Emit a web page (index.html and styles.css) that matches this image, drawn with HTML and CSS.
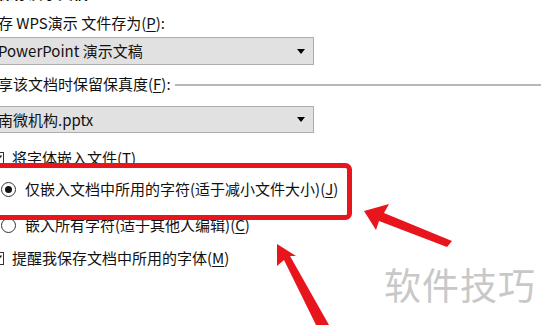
FILE: index.html
```html
<!doctype html>
<html lang="zh-CN">
<head>
  <meta charset="utf-8">
  <title>保存选项</title>
  <link rel="stylesheet" href="styles.css">
</head>
<body>
  <div class="dialog">
    <div class="cut">保存演示文稿</div>
    <div class="label">存 WPS演示 文件存为(<u>P</u>):</div>
    <div class="select"><span>PowerPoint 演示文稿</span><span class="caret"></span></div>
    <div class="group-title"><span>享该文档时保留保真度(<u>F</u>):</span></div>
    <div class="select second"><span>南微机构.pptx</span><span class="caret"></span></div>

    <div class="check first-check">
      <span class="box"><svg viewBox="0 0 13 13" width="13" height="13"><path d="M2.5 6.5 L5.2 9.3 L10.5 3.5" fill="none" stroke="#222" stroke-width="1.4"/></svg></span>
      <span>将字体嵌入文件(<u>T</u>)</span>
    </div>
    <div class="radio on"><span class="dot"></span><span>仅嵌入文档中所用的字符(适于减小文件大小)(<u>J</u>)</span></div>
    <div class="radio off"><span class="dot"></span><span>嵌入所有字符(适于其他人编辑)(<u>C</u>)</span></div>
    <div class="check last-check">
      <span class="box"><svg viewBox="0 0 13 13" width="13" height="13"><path d="M2.5 6.5 L5.2 9.3 L10.5 3.5" fill="none" stroke="#222" stroke-width="1.4"/></svg></span>
      <span>提醒我保存文档中所用的字体(<u>M</u>)</span>
    </div>
  </div>

  <div class="watermark">软件技巧</div>

  <!-- red annotations drawn over the dialog -->
  <svg class="marks" viewBox="0 0 541 325" width="541" height="325">
    <rect x="-10" y="165.5" width="359.5" height="52" rx="4" fill="none" stroke="#e8161c" stroke-width="5"/>
    <polygon points="364,211 389,204 384,213 452,241 447,247 379,221 376,230" fill="#e8161c"/>
    <polygon points="277,244 296,256 290,256 329,325 316,325 284,260 277,266" fill="#e8161c"/>
  </svg>
</body>
</html>
```

FILE: styles.css
```css
body {
  margin: 0;
  width: 541px;
  height: 325px;
  overflow: hidden;
  background: #fff;
  color: #111;
  font-family: "Noto Sans CJK SC", "Open Sans", sans-serif;
  font-size: 15px;
  line-height: 20px;
  position: relative;
}
u { text-decoration-thickness: 1px; text-underline-offset: 2px; }

.dialog {
  margin-left: -9px;
  display: flex;
  flex-direction: column;
}
.cut { margin-top: -17px; padding-left: 7px; font-weight: bold; }
.label { margin-top: 10px; padding-left: 7px; }

.select {
  margin-top: 4px;
  width: 323px;
  height: 28px;
  box-sizing: border-box;
  border: 1px solid #adadad;
  background: #e1e1e1;
  padding-left: 6px;
  display: flex;
  align-items: center;
  justify-content: space-between;
  padding-right: 8px;
}
.select.second { margin-top: 12px; height: 27px; }
.caret {
  width: 0; height: 0;
  border-left: 4px solid transparent;
  border-right: 4px solid transparent;
  border-top: 5px solid #000;
}

.group-title {
  margin-top: 9px;
  padding-left: 7px;
  display: flex;
  align-items: center;
  gap: 4px;
}
.group-title::after {
  content: "";
  flex: 1;
  height: 2px;
  background: #b8b8b8;
  margin-top: 1px;
}

.check, .radio { display: flex; align-items: center; }
.check { gap: 8px; }
.first-check { margin-top: 15px; }
.last-check { margin-top: 13px; }
.box {
  width: 13px; height: 13px;
  box-sizing: border-box;
  border: 1px solid #333;
  background: #fff;
  display: flex;
}
.box svg { margin: -1px; }

.radio { padding-left: 10px; gap: 9px; }
.radio.on { margin-top: 11px; }
.radio.off { margin-top: 16px; }
.dot {
  width: 15px; height: 15px;
  box-sizing: border-box;
  border: 1px solid #333;
  border-radius: 50%;
  display: flex;
  align-items: center;
  justify-content: center;
}
.radio.on .dot::after {
  content: "";
  width: 7px; height: 7px;
  border-radius: 50%;
  background: #111;
}

.watermark {
  position: absolute;
  left: 384px;
  top: 262px;
  font-size: 37px;
  line-height: 44px;
  letter-spacing: 1px;
  color: #c8c8c8;
}
.marks { position: absolute; left: 0; top: 0; }
```
